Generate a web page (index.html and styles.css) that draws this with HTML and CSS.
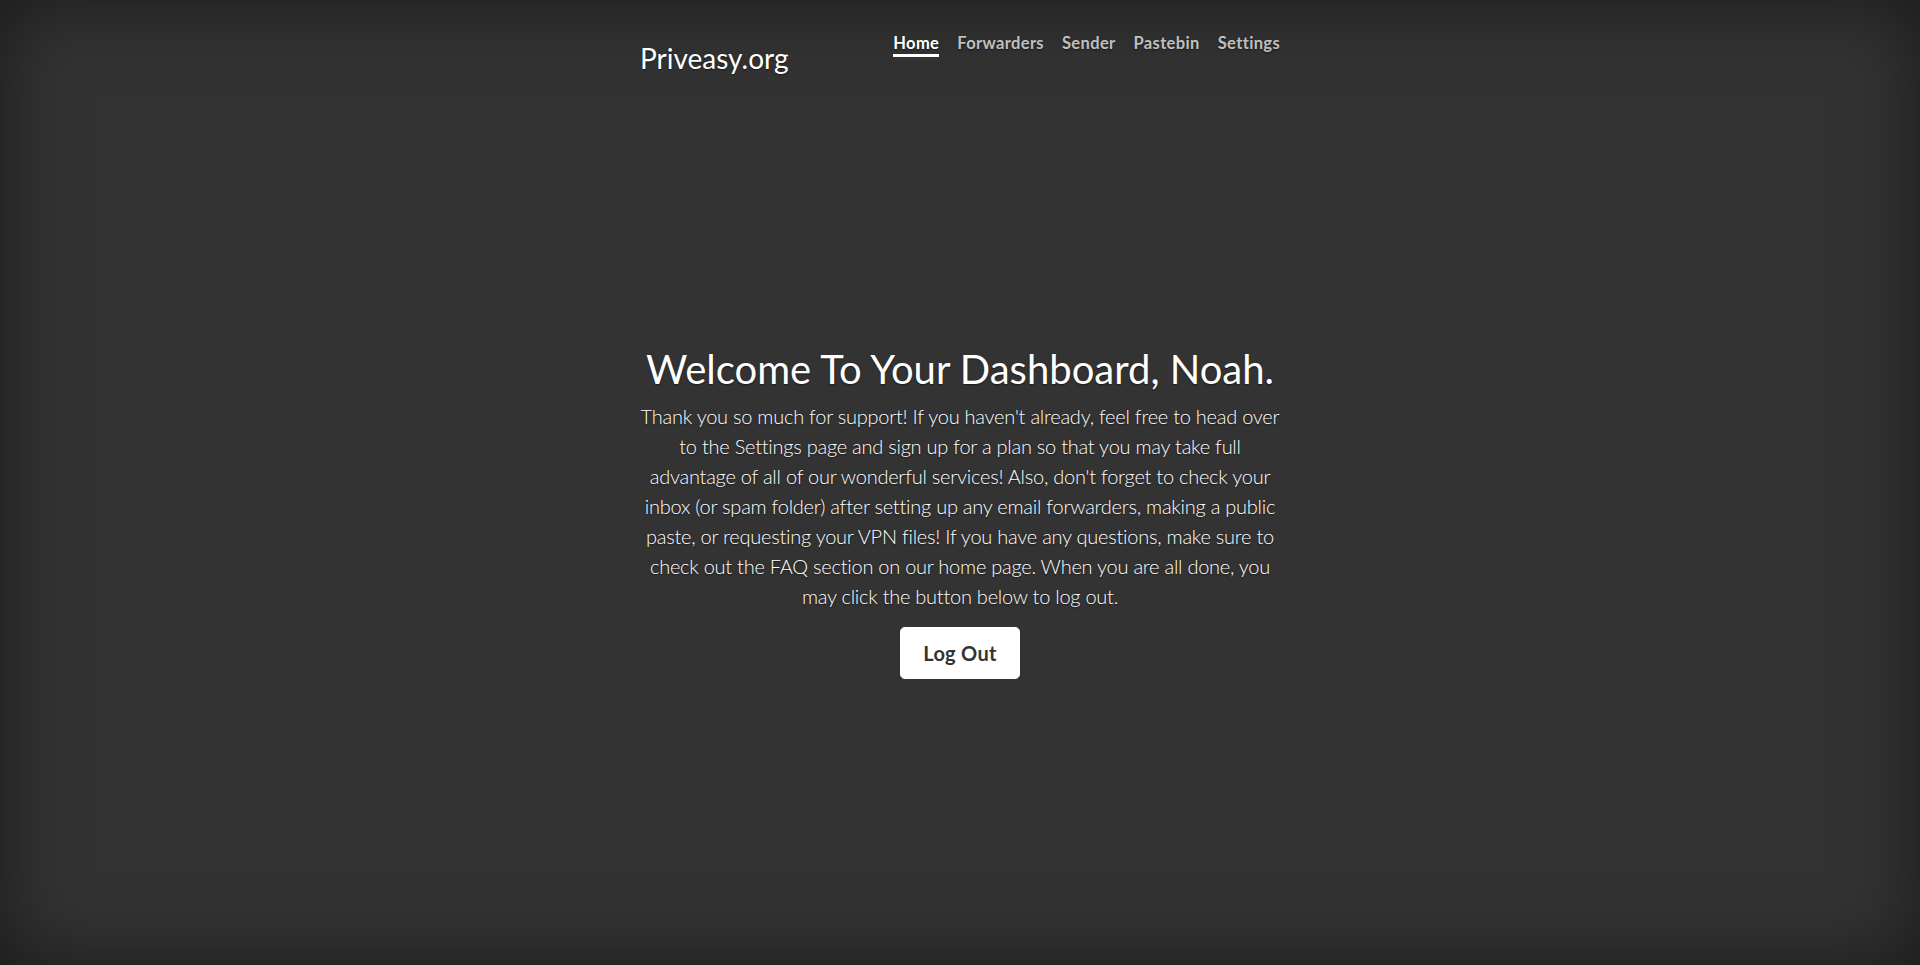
FILE: index.html
```html
<!DOCTYPE html>
<html lang="en">
<head>
<meta charset="utf-8">
<title>Priveasy.org</title>
<link rel="stylesheet" href="styles.css">
</head>
<body>
<div class="cover">
  <header class="masthead">
    <h3 class="brand">Priveasy.org</h3>
    <nav class="nav">
      <a class="nav-link active" href="#">Home</a>
      <a class="nav-link" href="#">Forwarders</a>
      <a class="nav-link" href="#">Sender</a>
      <a class="nav-link" href="#">Pastebin</a>
      <a class="nav-link" href="#">Settings</a>
    </nav>
  </header>
  <main class="inner">
    <h1 class="heading">Welcome To Your Dashboard, Noah.</h1>
    <p class="lead">Thank you so much for support! If you haven't already, feel free to head over to the Settings page and sign up for a plan so that you may take full advantage of all of our wonderful services! Also, don't forget to check your inbox (or spam folder) after setting up any email forwarders, making a public paste, or requesting your VPN files! If you have any questions, make sure to check out the FAQ section on our home page. When you are all done, you may click the button below to log out.</p>
    <a class="btn" href="#">Log Out</a>
  </main>
</div>
</body>
</html>
```

FILE: styles.css
```css
html, body {
  height: 100%;
  margin: 0;
}
body {
  background-color: #333;
  color: #fff;
  font-family: Lato, "Open Sans", sans-serif;
  font-size: 16px;
  line-height: 1.5;
  box-shadow: inset 0 0 5rem rgba(0, 0, 0, .5);
  text-shadow: 0 .05rem .1rem rgba(0, 0, 0, .5);
}
.cover {
  box-sizing: border-box;
  display: flex;
  flex-direction: column;
  height: 100%;
  max-width: 42em;
  margin: 0 auto;
  padding: 16px 16px 16px;
}
.masthead {
  display: flex;
  justify-content: space-between;
  align-items: flex-start;
  padding-top: 10px;
}
.brand {
  margin: 16px 0 0 0;
  font-size: 28px;
  font-weight: 400;
  line-height: 1.2;
}
.nav {
  display: flex;
}
.nav-link {
  margin-left: 18px;
  padding: 6.5px 0 0;
  font-size: 16.5px;
  line-height: 21px;
  letter-spacing: 0.35px;
  font-weight: 700;
  color: rgba(255, 255, 255, .72);
  text-decoration: none;
  border-bottom: 3px solid transparent;
}
.nav-link.active {
  color: #fff;
  border-bottom-color: #fff;
}
.inner {
  margin: auto 0;
  text-align: center;
}
.heading {
  margin: 0 0 8px;
  font-size: 40px;
  font-weight: 400;
  line-height: 1.2;
}
.lead {
  margin: 0 0 16px;
  font-size: 20px;
  font-weight: 300;
  letter-spacing: -0.25px;
  line-height: 1.5;
}
.btn {
  display: inline-block;
  padding: 10px 22px;
  font-size: 20px;
  line-height: 1.5;
  letter-spacing: 0.3px;
  font-weight: 700;
  color: #333;
  background: #fff;
  border: 1px solid #fff;
  border-radius: 4.8px;
  text-decoration: none;
  text-shadow: none;
}
```
